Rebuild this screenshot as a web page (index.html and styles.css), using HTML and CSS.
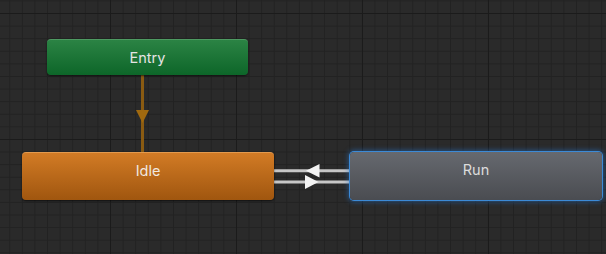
FILE: index.html
```html
<!DOCTYPE html>
<html>
<head>
<meta charset="utf-8">
<link rel="stylesheet" href="styles.css">
</head>
<body>
<div class="canvas">
  <svg class="edges" width="606" height="254" viewBox="0 0 606 254">
    <line x1="142.5" y1="75" x2="142.5" y2="152" stroke="#8a5b12" stroke-width="3"/>
    <polygon points="136,110 149,110 142.5,123" fill="#a0690f"/>
    <line x1="274" y1="170.7" x2="350" y2="170.7" stroke="#c6c6c6" stroke-width="3"/>
    <line x1="274" y1="182" x2="350" y2="182" stroke="#c6c6c6" stroke-width="3"/>
    <polygon points="306,170.7 319.5,164 319.5,177.5" fill="#f2f2f2"/>
    <polygon points="305,175 305,189 318.5,182" fill="#f2f2f2"/>
  </svg>
  <div class="node node-entry"><span class="label">Entry</span></div>
  <div class="node node-idle"><span class="label">Idle</span></div>
  <div class="node node-run"><span class="label">Run</span></div>
</div>
</body>
</html>
```
FILE: styles.css
```css
html, body {
  margin: 0;
  padding: 0;
  background: #292929;
}
.canvas {
  position: relative;
  width: 606px;
  height: 254px;
  overflow: hidden;
  background-color: #2a2a2a;
  background-image:
    linear-gradient(to right, #1b1b1b 1px, transparent 1px),
    linear-gradient(to bottom, #1b1b1b 1px, transparent 1px),
    linear-gradient(to right, #222222 1px, transparent 1px),
    linear-gradient(to bottom, #222222 1px, transparent 1px);
  background-size: 126px 126px, 126px 126px, 12.6px 12.6px, 12.6px 12.6px;
  background-position: 110px 13px, 110px 13px, 110px 13px, 110px 13px;
  font-family: Inter, "Noto Sans", sans-serif;
}
.edges {
  position: absolute;
  left: 0;
  top: 0;
}
.node {
  position: absolute;
  box-sizing: border-box;
  border-radius: 4px;
  display: flex;
  justify-content: center;
  font-size: 14.5px;
  color: #e4e4e4;
  box-shadow: 0 1px 2px rgba(0,0,0,0.6);
}
.node-entry {
  left: 47px;
  top: 39px;
  width: 201px;
  height: 36px;
  align-items: center;
  background: linear-gradient(to bottom, #2b8344, #0d6629);
  border-top: 1px solid #4e9a62;
}
.node-idle {
  left: 22px;
  top: 152px;
  width: 252px;
  height: 48px;
  padding-top: 8px;
  background: linear-gradient(to bottom, #d27b25, #a0560f);
  border-top: 1px solid #e39a4e;
  color: #f0e8e0;
}
.node-run {
  left: 350px;
  top: 152px;
  width: 252px;
  height: 48px;
  padding-top: 8px;
  background: linear-gradient(to bottom, #66696f, #4a4c51);
  box-shadow: 0 0 0 1px #3c8ad6, 0 0 5px 2px rgba(40,120,210,0.5);
  color: #dcdcdc;
}
.label {
  line-height: 20px;
}
```
